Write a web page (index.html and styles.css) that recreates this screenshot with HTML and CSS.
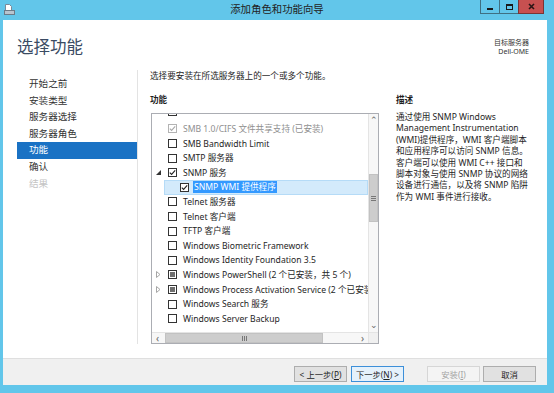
FILE: index.html
```html
<!DOCTYPE html>
<html lang="zh-CN">
<head>
  <meta charset="UTF-8">
  <title>添加角色和功能向导</title>
  <link rel="stylesheet" href="styles.css">
</head>
<body>
  <div class="window">
    <div class="titlebar">
      <div class="tb-left">
        <svg class="app-icon" width="11" height="11" viewBox="0 0 11 11">
          <path d="M1.5 0.5h4l2 2v4h-6z" fill="#fff" stroke="#7a8a99"/>
          <rect x="0.5" y="6.5" width="10" height="4" fill="#b8c4cf" stroke="#6b7a88"/>
        </svg>
      </div>
      <div class="tb-title">添加角色和功能向导</div>
      <div class="tb-right">
        <div class="wbtn"><span class="g-min"></span></div>
        <div class="wbtn"><span class="g-max"></span></div>
        <div class="wbtn close">
          <svg width="7" height="7" viewBox="0 0 7 7"><path d="M1 1l5 5M6 1l-5 5" stroke="#2a1414" stroke-width="1.6"/></svg>
        </div>
      </div>
    </div>

    <div class="client">
      <div class="content">
        <div class="header">
          <h1>选择功能</h1>
          <div class="target">
            <div>目标服务器</div>
            <div>Dell-OME</div>
          </div>
        </div>

        <div class="body">
          <div class="nav">
            <a href="#">开始之前</a>
            <a href="#">安装类型</a>
            <a href="#">服务器选择</a>
            <a href="#">服务器角色</a>
            <a href="#" class="active">功能</a>
            <a href="#">确认</a>
            <a href="#" class="disabled">结果</a>
          </div>

          <div class="main">
            <p class="intro">选择要安装在所选服务器上的一个或多个功能。</p>
            <div class="columns">
              <div class="features">
                <div class="label">功能</div>
                <div class="listbox">
                  <div class="items">
                    <div class="row cut"><span class="exp"></span><span class="cb"></span></div>
                    <div class="row dim">
                      <span class="exp"></span>
                      <span class="cb"><svg width="7" height="7" viewBox="0 0 7 7"><path d="M0.8 3.6l1.8 1.8 3.6-4" fill="none" stroke="#a8a8a8" stroke-width="1.1"/></svg></span>
                      <span class="txt">SMB 1.0/CIFS 文件共享支持 (已安装)</span>
                    </div>
                    <div class="row"><span class="exp"></span><span class="cb"></span><span class="txt">SMB Bandwidth Limit</span></div>
                    <div class="row"><span class="exp"></span><span class="cb"></span><span class="txt">SMTP 服务器</span></div>
                    <div class="row">
                      <span class="exp"><svg width="5" height="5" viewBox="0 0 5 5"><path d="M5 0v5h-5z" fill="#333"/></svg></span>
                      <span class="cb"><svg width="7" height="7" viewBox="0 0 7 7"><path d="M0.8 3.6l1.8 1.8 3.6-4" fill="none" stroke="#222" stroke-width="1.1"/></svg></span>
                      <span class="txt">SNMP 服务</span>
                    </div>
                    <div class="row child selected">
                      <span class="exp"></span>
                      <span class="cb"><svg width="7" height="7" viewBox="0 0 7 7"><path d="M0.8 3.6l1.8 1.8 3.6-4" fill="none" stroke="#222" stroke-width="1.1"/></svg></span>
                      <span class="txt hl">SNMP WMI 提供程序</span>
                    </div>
                    <div class="row"><span class="exp"></span><span class="cb"></span><span class="txt">Telnet 服务器</span></div>
                    <div class="row"><span class="exp"></span><span class="cb"></span><span class="txt">Telnet 客户端</span></div>
                    <div class="row"><span class="exp"></span><span class="cb"></span><span class="txt">TFTP 客户端</span></div>
                    <div class="row"><span class="exp"></span><span class="cb"></span><span class="txt">Windows Biometric Framework</span></div>
                    <div class="row"><span class="exp"></span><span class="cb"></span><span class="txt">Windows Identity Foundation 3.5</span></div>
                    <div class="row">
                      <span class="exp"><svg width="5" height="7" viewBox="0 0 5 7"><path d="M0.5 0.5l3.5 3-3.5 3z" fill="none" stroke="#a6a6a6"/></svg></span>
                      <span class="cb part"><i></i></span>
                      <span class="txt">Windows PowerShell (2 个已安装，共 5 个)</span>
                    </div>
                    <div class="row">
                      <span class="exp"><svg width="5" height="7" viewBox="0 0 5 7"><path d="M0.5 0.5l3.5 3-3.5 3z" fill="none" stroke="#a6a6a6"/></svg></span>
                      <span class="cb part"><i></i></span>
                      <span class="txt">Windows Process Activation Service (2 个已安装，共 3 个)</span>
                    </div>
                    <div class="row"><span class="exp"></span><span class="cb"></span><span class="txt">Windows Search 服务</span></div>
                    <div class="row"><span class="exp"></span><span class="cb"></span><span class="txt">Windows Server Backup</span></div>
                  </div>
                  <div class="vscroll">
                    <span class="arrow">&#8963;</span>
                    <div class="vtrack"><div class="vthumb"><i></i></div></div>
                    <span class="arrow down">&#8964;</span>
                  </div>
                  <div class="hscroll">
                    <span class="harrow">&lsaquo;</span>
                    <div class="htrack"><div class="hthumb"><i></i></div></div>
                    <span class="harrow">&rsaquo;</span>
                  </div>
                  <div class="corner"></div>
                </div>
              </div>

              <div class="desc">
                <div class="label">描述</div>
                <p>通过使用 SNMP Windows<br>Management Instrumentation<br>(WMI)提供程序，WMI 客户端脚本<br>和应用程序可以访问 SNMP 信息。<br>客户端可以使用 WMI C++ 接口和<br>脚本对象与使用 SNMP 协议的网络<br>设备进行通信，以及将 SNMP 陷阱<br>作为 WMI 事件进行接收。</p>
              </div>
            </div>
          </div>
        </div>
      </div>

      <div class="footer">
        <button>&lt; 上一步(<u>P</u>)</button>
        <button class="default">下一步(<u>N</u>) &gt;</button>
        <button class="install" disabled>安装(<u>I</u>)</button>
        <button>取消</button>
      </div>
    </div>
  </div>
</body>
</html>
```

FILE: styles.css
```css
* { box-sizing: border-box; }
body {
  margin: 0;
  font-family: "Noto Sans", "Noto Sans CJK SC", sans-serif;
  font-size: 8.6px;
  color: #1e1e1e;
  background-color: #62c6ea;
}
.window {
  width: 554px;
  height: 393px;
  display: flex;
  flex-direction: column;
  overflow: hidden;
}

/* title bar */
.titlebar {
  height: 20px;
  display: grid;
  grid-template-columns: 1fr auto 1fr;
  align-items: start;
}
.tb-left {
  padding: 4px 0 0 4px;
}
.app-icon { display: block; }
.tb-title {
  font-size: 10.4px;
  line-height: 19px;
  color: #222;
}
.tb-right {
  display: flex;
  justify-content: flex-end;
  padding-right: 10px;
}
.wbtn {
  width: 20px;
  height: 14px;
  border: 1px solid #3f6f82;
  border-top: none;
  margin-left: -1px;
  display: flex;
  align-items: center;
  justify-content: center;
}
.wbtn.close {
  width: 26px;
  background-color: #c75050;
  border-color: #7a3535;
}
.g-min {
  width: 6px;
  height: 2px;
  margin-top: 4px;
  background: #1a1a1a;
}
.g-max {
  width: 7px;
  height: 6px;
  border: 1px solid #1a1a1a;
  border-top-width: 2px;
}

/* client area */
.client {
  margin: 0 7px 8px 3px;
  height: 365px;
  display: flex;
  flex-direction: column;
}
.content {
  height: 338px;
  background: #fff;
  padding-top: 17px;
}
.header {
  height: 20px;
  display: flex;
  justify-content: space-between;
  align-items: flex-start;
  padding: 0 18px 0 14px;
}
h1 {
  margin: 0;
  font-size: 16.5px;
  line-height: 20px;
  font-weight: normal;
  color: #3a4b63;
}
.target {
  font-size: 7px;
  line-height: 9px;
  text-align: right;
  color: #333;
  padding-top: 1px;
}

.body {
  margin-top: 13px;
  height: 274px;
  display: flex;
}
.nav {
  width: 135px;
  padding: 6px 0 0 14px;
  border-right: 1px solid #e3e3e3;
}
.nav a {
  display: block;
  height: 16.6px;
  line-height: 16.6px;
  padding-left: 12px;
  font-size: 9.6px;
  color: #333;
  text-decoration: none;
}
.nav a.active {
  background-color: #1a72c4;
  color: #fff;
}
.nav a.disabled { color: #c4c4c4; }

.main {
  flex: 1;
  padding-left: 12px;
}
.intro {
  margin: 0;
  line-height: 12px;
}
.columns {
  display: flex;
  margin-top: 12px;
}
.label {
  font-weight: bold;
  line-height: 12px;
}
.features { width: 229px; }
.listbox {
  margin: 7px 0 0 1px;
  width: 228px;
  height: 231px;
  border: 1px solid #abadb3;
  display: grid;
  grid-template-columns: 1fr 10px;
  grid-template-rows: 1fr 11px;
}
.items { overflow: hidden; }
.row {
  height: 14.6px;
  display: flex;
  align-items: center;
  white-space: nowrap;
}
.row.cut {
  height: 7.7px;
  align-items: flex-start;
  overflow: hidden;
}
.row.cut .cb { margin-top: -7px; }
.row.child { margin-left: 12px; }
.row.selected {
  background-color: #d3eafb;
  box-shadow: inset 0 0 0 1px #b5dbf7;
}
.exp {
  width: 12px;
  flex: none;
  display: flex;
  justify-content: center;
  align-items: center;
}
.cb {
  width: 9px;
  height: 9px;
  flex: none;
  margin-left: 4px;
  border: 1px solid #333;
  background: #fff;
  display: flex;
  align-items: center;
  justify-content: center;
}
.cb svg { display: block; }
.cb.part i {
  width: 5px;
  height: 5px;
  background: #6f6f6f;
}
.row.dim .cb { border-color: #b3b3b3; }
.row.dim .txt { color: #8f8f8f; }
.txt {
  margin-left: 6px;
  line-height: 12px;
}
.txt.hl {
  margin-left: 4px;
  padding: 0 1px;
  background-color: #3399ff;
  color: #fff;
}

.vscroll {
  background: #f7f7f7;
  border-left: 1px solid #e4e4e4;
  display: flex;
  flex-direction: column;
  align-items: center;
}
.arrow {
  height: 10px;
  line-height: 12px;
  font-size: 9px;
  color: #666;
}
.arrow.down { line-height: 6px; }
.vtrack {
  flex: 1;
  width: 100%;
}
.vthumb {
  margin-top: 50px;
  height: 48px;
  background: #cdcdcd;
  border: 1px solid #c2c2c2;
  display: flex;
  align-items: center;
  justify-content: center;
}
.vthumb i, .hthumb i {
  display: block;
  width: 5px;
  height: 5px;
  border-top: 1px solid #777;
  border-bottom: 1px solid #777;
  background: linear-gradient(#777, #777) center / 100% 1px no-repeat;
}
.hscroll {
  background: #f7f7f7;
  border-top: 1px solid #e4e4e4;
  display: flex;
  align-items: center;
}
.harrow {
  width: 11px;
  text-align: center;
  font-size: 10px;
  line-height: 10px;
  color: #666;
}
.htrack {
  flex: 1;
  height: 100%;
  padding: 0 34px 0 2px;
}
.hthumb {
  height: 100%;
  background: #cdcdcd;
  border: 1px solid #c2c2c2;
  display: flex;
  align-items: center;
  justify-content: center;
}
.hthumb i { transform: rotate(90deg); }
.corner {
  background: #f0f0f0;
  border-top: 1px solid #e4e4e4;
  border-left: 1px solid #e4e4e4;
}

.desc {
  margin-left: 17px;
  width: 140px;
}
.desc p {
  margin: 6px 0 0;
  line-height: 11.4px;
  white-space: nowrap;
}

/* footer */
.footer {
  height: 27px;
  background: #f0f0f0;
  border-top: 1px solid #dfdfdf;
  display: flex;
  justify-content: flex-end;
  align-items: flex-start;
  padding: 7px 11px 0 0;
  gap: 4px;
}
button {
  width: 53px;
  height: 16px;
  padding: 0;
  font-family: inherit;
  font-size: 8.3px;
  color: #1e1e1e;
  background-color: #e1e1e1;
  border: 1px solid #adadad;
}
button.default {
  background-color: #e5f1fb;
  border-color: #3c8fd9;
}
button.install {
  margin-left: 19px;
  margin-right: -1px;
  background-color: #f4f4f4;
  border-color: #d6d6d6;
  color: #a3a3a3;
}
```
